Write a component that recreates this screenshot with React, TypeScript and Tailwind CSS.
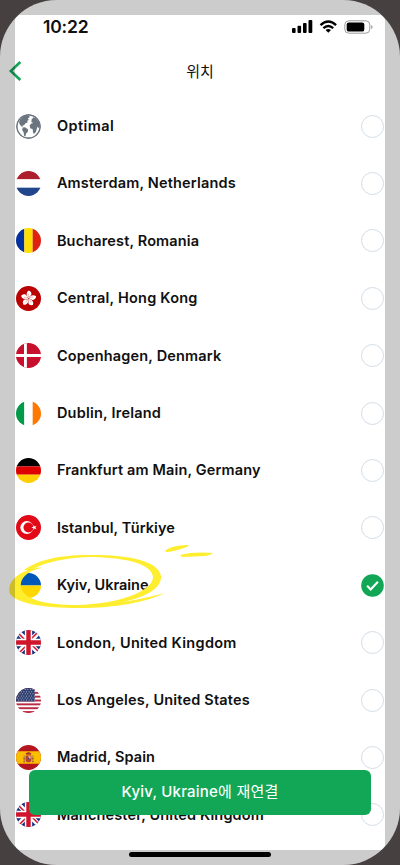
import React from 'react';
import { clsx } from 'clsx';

interface Location {
    name: string;
    flag: React.ReactNode;
    spacing: string;
    selected?: boolean;
}

const star = (cx: number, cy: number, r: number, turn = -90) =>
    Array.from({ length: 10 }, (_, i) => {
        const a = ((turn + i * 36) * Math.PI) / 180;
        const d = i % 2 ? r * 0.4 : r;
        return `${cx + d * Math.cos(a)},${cy + d * Math.sin(a)}`;
    }).join(' ');

// Three equal bands, horizontal or vertical
function Bands({ colors, vertical }: { colors: string[]; vertical?: boolean }) {
    return (
        <>
            {colors.map((c, i) =>
                vertical ? (
                    <rect key={i} x={i * 8.67} y="0" width="8.7" height="26" fill={c} />
                ) : (
                    <rect key={i} x="0" y={i * 8.67} width="26" height="8.7" fill={c} />
                ),
            )}
        </>
    );
}

function Globe() {
    return (
        <>
            <circle cx="13" cy="13" r="12.1" fill="#fff" stroke="#6b7580" strokeWidth="1.7" />
            <g fill="#6b7580">
                <path d="M4.4 5.4 8.2 2.2 12.6 1.6 14.6 3 12.2 4.6 13.4 6 11.6 7.2 12.2 8.8 9.8 9.6 8.4 11.6 6.6 12 7.2 13.6 5.4 12.8 3.6 10.4 3.2 8Z" />
                <path d="M7 14 9.4 13.8 12.6 16 12.2 18.6 10.4 20.4 9.8 23.4 8.4 22.6 8 19.2 6.4 16.6Z" />
                <path d="M16.2 5.6 18.2 3.4 21 4.6 24 8.6 24.9 13 23.6 14.8 22.4 13 21.6 15.6 20.6 18.8 18.6 20.8 17.6 18.6 17.4 15.8 14.8 14.8 14.2 12 15.8 9.8 18 9.4 16 8.4Z" />
            </g>
        </>
    );
}

function HongKong() {
    return (
        <>
            <rect width="26" height="26" fill="#ba0000" />
            {[0, 72, 144, 216, 288].map((a) => (
                <g key={a} transform={`rotate(${a + 8} 13 13)`}>
                    <path d="M13 12.8C10.4 11.4 9.2 7.2 12.2 4.8C14.8 5.4 16.2 8 14.9 9.7C14.1 10.7 13.2 11.5 13 12.8Z" fill="#fff" />
                    <path d="M12.9 11.6C12.1 10.4 12 9.2 12.5 8" stroke="#ba0000" strokeWidth=".3" fill="none" />
                </g>
            ))}
        </>
    );
}

function Britain() {
    return (
        <>
            <rect width="26" height="26" fill="#17307c" />
            <path d="M0 0 26 26M26 0 0 26" stroke="#fff" strokeWidth="5" />
            <path d="M-1 0 12 13M27 26 14 13M25 0 12 13M1 26 14 13" stroke="#cf142b" strokeWidth="1.6" />
            <path d="M13 0V26M0 13H26" stroke="#fff" strokeWidth="7.6" />
            <path d="M13 0V26M0 13H26" stroke="#cf142b" strokeWidth="4.6" />
        </>
    );
}

function America() {
    return (
        <>
            <rect width="26" height="26" fill="#fff" />
            {[0, 1, 2, 3, 4, 5, 6].map((i) => (
                <rect key={i} y={i * 4} width="26" height="2" fill="#b92b43" />
            ))}
            <rect width="19.5" height="14" fill="#2d3e70" />
            {[0, 1, 2, 3, 4, 5].map((r) =>
                [0, 1, 2, 3, 4, 5, 6].map((c) => (
                    <circle key={`${r}-${c}`} cx={1.5 + c * 2.7 + (r % 2) * 1.3} cy={1.6 + r * 2.2} r=".52" fill="#fff" opacity=".8" />
                )),
            )}
        </>
    );
}

function Spain() {
    return (
        <>
            <rect width="26" height="26" fill="#b5151f" />
            <rect y="6.5" width="26" height="13" fill="#fabd00" />
            <path d="M10 11H16V15.5Q16 18 13 18Q10 18 10 15.5Z" fill="#b8442c" />
            <path d="M10.5 10.2 10 8.5 13 7.2 16 8.5 15.5 10.2Z" fill="#b23a24" />
            <path d="M8.5 11V17.5M17.5 11V17.5" stroke="#a98250" strokeWidth="1.2" />
            <path d="M7.6 17.5H9.6M16.5 17.5H18.5M7.6 14.2H9.6M16.5 14.2H18.5" stroke="#ad3c25" strokeWidth=".8" />
            <path d="M13.2 11.5H15.2V14H13.2Z" fill="#dcb5a0" />
            <circle cx="13" cy="14.4" r=".8" fill="#394b91" />
        </>
    );
}

const locations: Location[] = [
    { name: 'Optimal', flag: <Globe />, spacing: 'tracking-[0.43px]' },
    { name: 'Amsterdam, Netherlands', flag: <Bands colors={['#ad1f2d', '#fff', '#21468b']} />, spacing: 'tracking-[0.17px]' },
    { name: 'Bucharest, Romania', flag: <Bands vertical colors={['#00319c', '#ffde00', '#de2110']} />, spacing: 'tracking-[0.15px]' },
    { name: 'Central, Hong Kong', flag: <HongKong />, spacing: 'tracking-[0.23px]' },
    {
        name: 'Copenhagen, Denmark',
        flag: (
            <>
                <rect width="26" height="26" fill="#c8102e" />
                <path d="M9.8 0V26M0 13H26" stroke="#fff" strokeWidth="3" />
            </>
        ),
        spacing: 'tracking-[0.17px]',
    },
    { name: 'Dublin, Ireland', flag: <Bands vertical colors={['#009a49', '#fff', '#ff7900']} />, spacing: 'tracking-[0.22px]' },
    { name: 'Frankfurt am Main, Germany', flag: <Bands colors={['#000', '#de0000', '#ffcf00']} />, spacing: 'tracking-[0.15px]' },
    {
        name: 'Istanbul, Türkiye',
        flag: (
            <>
                <rect width="26" height="26" fill="#e30a17" />
                <circle cx="11.3" cy="13" r="6.8" fill="#fff" />
                <circle cx="13" cy="13" r="5.2" fill="#e30a17" />
                <polygon points={star(19, 13, 2.9, 180)} fill="#fff" />
            </>
        ),
        spacing: 'tracking-[0.08px]',
    },
    {
        name: 'Kyiv, Ukraine',
        flag: (
            <>
                <rect width="26" height="13" fill="#0057b8" />
                <rect y="13" width="26" height="13" fill="#ffd700" />
            </>
        ),
        spacing: 'tracking-[-0.03px]',
        selected: true,
    },
    { name: 'London, United Kingdom', flag: <Britain />, spacing: 'tracking-[0.3px]' },
    { name: 'Los Angeles, United States', flag: <America />, spacing: 'tracking-[0.19px]' },
    { name: 'Madrid, Spain', flag: <Spain />, spacing: 'tracking-[0.08px]' },
    { name: 'Manchester, United Kingdom', flag: <Britain />, spacing: 'tracking-[0.14px]' },
];

function StatusBar() {
    return (
        <div className="flex h-[54px] shrink-0 items-center justify-between pl-[43px] pr-[27px]">
            <span className="font-['Inter',sans-serif] text-[17.5px] font-semibold leading-none tracking-[-0.2px]">10:22</span>
            <svg width="81" height="14" viewBox="0 0 81 14">
                <rect x="0" y="8" width="3.6" height="5" rx="1" />
                <rect x="5.5" y="5.8" width="3.6" height="7.2" rx="1" />
                <rect x="11" y="3" width="3.6" height="10" rx="1" />
                <rect x="16.5" y="0" width="3.8" height="13" rx="1" />
                <g fill="none" stroke="#000" strokeWidth="2.3">
                    <path d="M28.5 5.1Q36.3-2 44.1 5.1" />
                    <path d="M31.4 8.2Q36.3 3.7 41.2 8.2" />
                </g>
                <path d="M33.6 10Q36.3 8 39 10L36.3 12.8Z" />
                <rect x="52.8" y=".8" width="25" height="12.4" rx="4" fill="none" stroke="#9c9c9c" />
                <rect x="54.7" y="2.4" width="17.6" height="9.2" rx="2.2" />
                <path d="M79.2 5V9Q80.6 8.4 80.6 7T79.2 5Z" fill="#9c9c9c" />
            </svg>
        </div>
    );
}

function LocationRow({ name, flag, spacing, selected }: Location) {
    return (
        <li className="flex h-[57.42px] shrink-0 items-center">
            <svg className="size-[25px] shrink-0 rounded-full" viewBox="0 0 26 26">
                {flag}
            </svg>
            <span className={clsx('ml-[15.5px] flex-1 whitespace-nowrap text-[14.5px] font-semibold leading-5', spacing)}>{name}</span>
            {selected ? (
                <svg width="23" height="23" viewBox="0 0 23 23">
                    <circle cx="11.5" cy="11.5" r="11.3" fill="#12a757" />
                    <path d="M6.1 11.8 9.7 15.5 16.9 7.8" fill="none" stroke="#fff" strokeWidth="2.1" />
                </svg>
            ) : (
                <span className="size-[23px] rounded-full border border-[#d3dde6]" />
            )}
        </li>
    );
}

// Hand drawn marker around the chosen city
function Marker() {
    return (
        <svg className="pointer-events-none absolute left-0 top-[530px]" width="230" height="90" viewBox="0 530 230 90" fill="#ffed30">
            <path
                fillRule="evenodd"
                d="M24 570C37 560 61 555 87 555C124 554 159 560 161 576C162 588 146 597 123 602C141 599 153 596 165 593C146 602 117 608 78 608C45 608 19 604 11 595C6 587 12 576 28 570ZM42 568C26 571 20 579 21 587C23 600 48 605 77 605C119 604 153 591 153 577C152 563 122 557 88 557C65 558 46 562 33 569C36 568 39 567 42 568Z"
            />
            <path d="M165 551C169 547 179 545 189 545Q188 547 184 548C178 550 171 552 166 552Z" />
            <path d="M180 555C190 552 203 552 213 553Q211 555 205 556L182 557Z" />
        </svg>
    );
}

export default function App() {
    return (
        <div className="h-[865px] w-[400px] overflow-hidden bg-[#474040]">
            <div className="relative flex h-full flex-col overflow-hidden rounded-[57px] bg-white font-['Inter','Noto_Sans_CJK_KR',sans-serif] text-[#101010]">
                <StatusBar />
                <header className="grid h-[43.3px] shrink-0 grid-cols-[40px_1fr_40px] items-center">
                    <svg className="-mt-[10px] ml-[9px]" width="13" height="20" viewBox="0 0 13 20">
                        <path d="M11.3 1 1.8 10 11.3 19" fill="none" stroke="#12a757" strokeWidth="2.6" />
                    </svg>
                    <h1 className="-mt-[10px] text-center font-['Noto_Sans_CJK_KR',sans-serif] text-[15px] leading-5">위치</h1>
                </header>

                <ul className="flex flex-col pl-[16.4px] pr-4">
                    {locations.map((l) => (
                        <LocationRow key={l.name} {...l} />
                    ))}
                </ul>

                <Marker />

                <button className="absolute left-[29px] top-[769.5px] h-[45px] w-[342px] rounded-md bg-[#12a757] text-[15px] font-medium tracking-[0.2px] text-white">
                    Kyiv, Ukraine<span className="font-normal">에 재연결</span>
                </button>

                {/* Dimmed frame */}
                <div className="pointer-events-none absolute inset-0 border-[15px] border-black/20" />
                <div className="absolute bottom-[8.5px] left-[129px] h-[5px] w-[142px] rounded-full bg-black" />
            </div>
        </div>
    );
}
